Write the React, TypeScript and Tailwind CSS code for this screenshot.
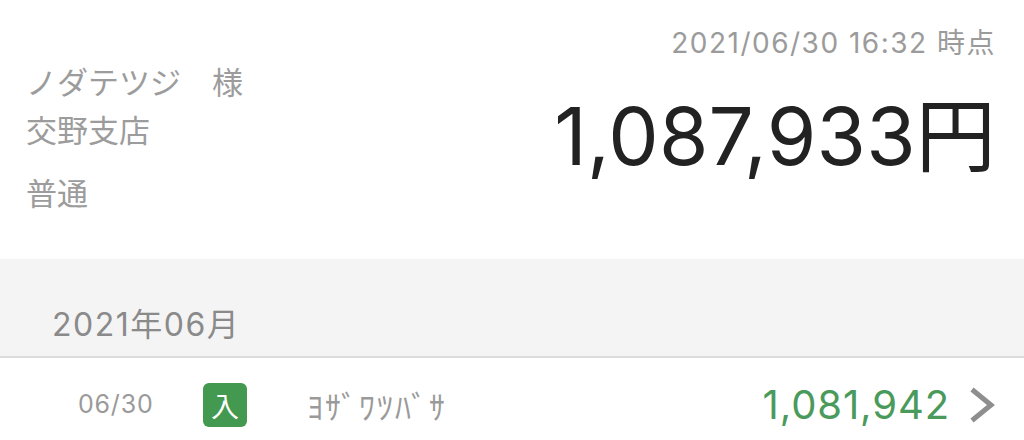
import React from "react";

const latin = { fontFamily: 'Inter, "Noto Sans CJK JP", sans-serif' };
const jp = { fontFamily: '"Noto Sans CJK JP", Inter, sans-serif' };

function Chevron() {
  return (
    <svg width="26" height="36" viewBox="0 0 26 36" fill="none">
      <path d="M3 2.5 L22 18 L3 33.5" stroke="#8e8e8e" strokeWidth="5" strokeLinejoin="miter" />
    </svg>
  );
}

export default function App() {
  return (
    <div className="w-[1024px] h-[440px] overflow-hidden bg-white" style={latin}>
      {/* Account summary */}
      <div className="h-[259px] flex justify-between">
        <div className="pl-[26px] pt-[57px] text-[31px] text-[#9c9c9c]" style={jp}>
          <div className="leading-[48px]">ノダテツジ　様</div>
          <div className="leading-[48px]">交野支店</div>
          <div className="leading-[48px] mt-[15px]">普通</div>
        </div>
        <div className="pr-[28px] pt-[23px] flex flex-col items-end">
          <div className="text-[28px] leading-[40px] text-[#9b9b9b] tracking-[1.5px]">
            2021/06/30 16:32 時点
          </div>
          <div className="mt-[25px] text-[80px] leading-[96px] text-[#222222] tracking-[0.2px]">
            1,087,933円
          </div>
        </div>
      </div>

      {/* Month header */}
      <div className="h-[99px] bg-[#f4f4f4] border-b-2 border-[#dcdcdc] pl-[52px] pt-[46px]">
        <div className="text-[32px] leading-[40px] text-[#8a8a8a] tracking-[1.5px]">2021年06月</div>
      </div>

      {/* Transaction row */}
      <div className="h-[94px] flex items-center">
        <div className="pl-[78px] w-[203px] text-[25px] text-[#9a9a9a] tracking-[0.8px]">06/30</div>
        <div className="w-[44px] h-[44px] rounded-[6px] bg-[#43994f] flex items-center justify-center text-white text-[28px] leading-none" style={jp}>
          入
        </div>
        <div className="ml-[60px] text-[32px] text-[#9a9a9a] tracking-[2px]" style={jp}>
          ﾖｻﾞﾜﾂﾊﾞｻ
        </div>
        <div className="ml-auto text-[40px] leading-none text-[#4a9a5c] tracking-[0.9px]">1,081,942</div>
        <div className="ml-[19px] mr-[29px] flex items-center">
          <Chevron />
        </div>
      </div>
    </div>
  );
}
